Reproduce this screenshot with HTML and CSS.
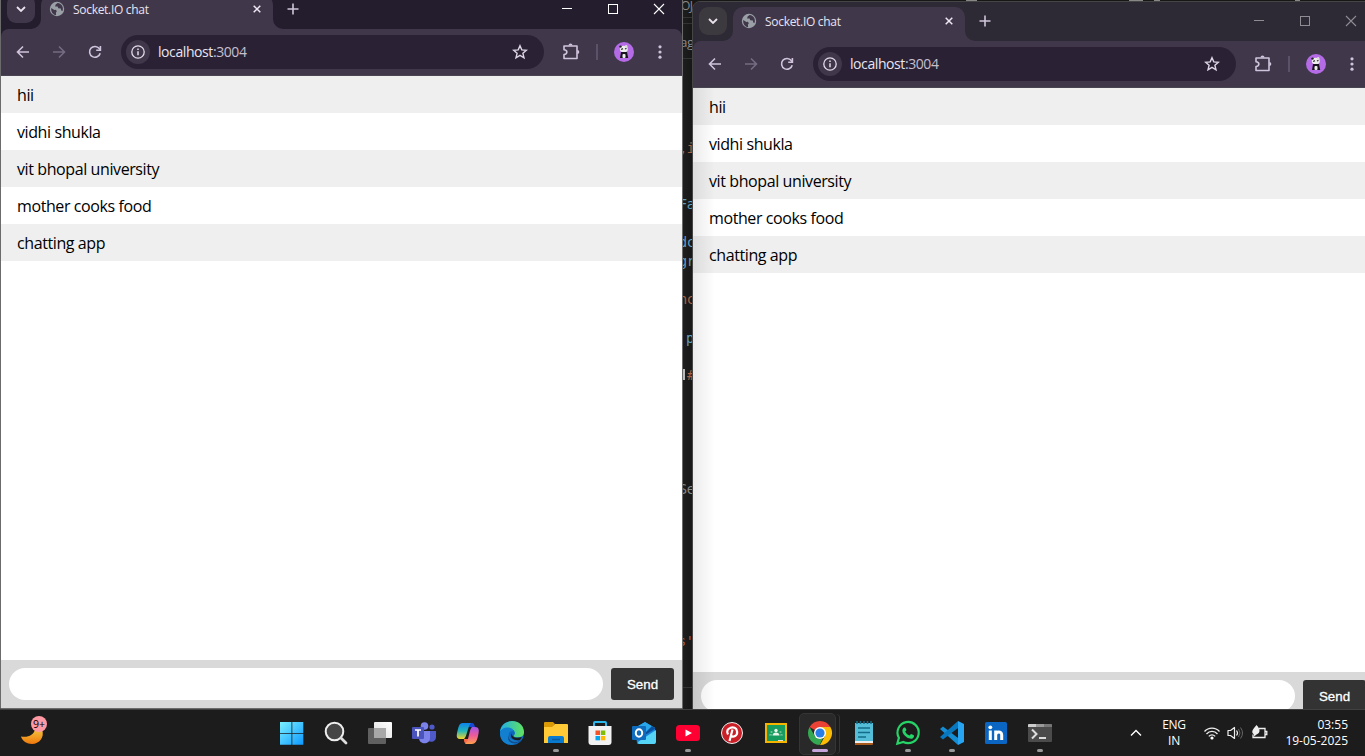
FILE: index.html
```html
<!DOCTYPE html>
<html lang="en">
<head>
<meta charset="utf-8">
<title>Socket.IO chat</title>
<link rel="stylesheet" href="styles.css">
</head>
<body>
<svg class="defs" aria-hidden="true">
  <defs>
    <symbol id="chev" viewBox="0 0 10 6"><path d="M1 1l4 4 4-4" fill="none" stroke="currentColor" stroke-width="1.8"/></symbol>
    <symbol id="globe" viewBox="0 0 16 16"><circle cx="8" cy="8" r="7.2" fill="#9aa0a6"/><path d="M2.2 6.9l3.2 2.1 1.6-.2.8 1.8-.9 1 .2 2.5C4.1 13.700 1.800 11 2.200 6.900zM8.600 1.900L6.600 3.500l-.5 1.900 2.500.1.700 1.700 2.500.3.600 2.200 1.100.3C14.800 6 12.800 2.400 8.600 1.900z" fill="#40374b"/></symbol>
    <symbol id="x" viewBox="0 0 8 8"><path d="M.7.7l6.600 6.600M7.300.7L.7 7.300" stroke="currentColor" stroke-width="1.500"/></symbol>
    <symbol id="plus" viewBox="0 0 12 12"><path d="M6 .5v11M.5 6h11" stroke="currentColor" stroke-width="1.600"/></symbol>
    <symbol id="back" viewBox="0 0 16 16"><path d="M14 8H3M8 2.500L2.500 8 8 13.500" fill="none" stroke="currentColor" stroke-width="1.600"/></symbol>
    <symbol id="reload" viewBox="0 0 16 16"><path d="M13.200 9.200A5.400 5.400 0 1 1 12.300 4.600L13.400 6" fill="none" stroke="currentColor" stroke-width="1.600"/><path d="M13.400 2v4.200H9.200" fill="none" stroke="currentColor" stroke-width="1.600"/></symbol>
    <symbol id="info" viewBox="0 0 14 14"><circle cx="7" cy="7" r="6.200" fill="none" stroke="currentColor" stroke-width="1.300"/><path d="M7 6.200v4M7 3.600v1.500" stroke="currentColor" stroke-width="1.500"/></symbol>
    <symbol id="star" viewBox="0 0 16 16"><path d="M8 1.700l1.800 4.200 4.600.4-3.500 3 1.100 4.500L8 11.400l-4 2.400 1.100-4.500-3.500-3 4.600-.4z" fill="none" stroke="currentColor" stroke-width="1.400"/></symbol>
    <symbol id="puzzle" viewBox="0 0 18 18"><path d="M2 3h13v12.500H2v-4c3.800-.2 3.800-4.600 0-4.800z" fill="none" stroke="currentColor" stroke-width="1.600" stroke-linejoin="round"/><path d="M6.500 2.500a2 2 0 0 1 4 0zM15.300 7a2 2 0 0 1 0 4z" fill="currentColor"/></symbol>
    <symbol id="avatar" viewBox="0 0 20 20"><circle cx="10" cy="10" r="10" fill="#b66be6"/><ellipse cx="9.800" cy="7" rx="4" ry="3.200" fill="#eee"/><circle cx="6.500" cy="4.600" r="1.200" fill="#222"/><circle cx="12.200" cy="4.200" r="1.200" fill="#ddd"/><path d="M7 7.500l2-.8M11 7l1.500-.6" stroke="#333" stroke-width="1.300"/><path d="M7 10h6l1.200 6H6z" fill="#18141c"/><rect x="8.500" y="12" width="3" height="4" rx="1" fill="#eee"/></symbol>
    <symbol id="dots" viewBox="0 0 4 14"><g fill="currentColor"><circle cx="2" cy="1.800" r="1.600"/><circle cx="2" cy="7" r="1.600"/><circle cx="2" cy="12.200" r="1.600"/></g></symbol>
    <symbol id="flare" viewBox="0 0 10 10"><path d="M10 0v10H0A10 10 0 0 0 10 0z" fill="#40374b"/></symbol>
  </defs>
</svg>

<div class="desktop">
  <div class="editor">
    <i class="rule r1"></i><i class="rule r2"></i><i class="rule r3"></i><i class="rule r4"></i>
    <span class="code grey c-oj">OJ</span>
    <span class="code grey c-ag">ag</span>
    <span class="code orange c-i">,i</span>
    <span class="code blue c-fa">Fa</span>
    <span class="code blue c-do">dc</span>
    <span class="code blue c-gr">gr</span>
    <span class="code orange c-no">nc</span>
    <span class="code blue c-p">p</span>
    <i class="cursor"></i><span class="code orange c-hash">#</span>
    <span class="code grey c-se">Se</span>
    <span class="code orange c-s">s'</span>
    <i class="bit b1"></i><i class="bit b2"></i><i class="bit b3"></i><i class="bit b4"></i>
  </div>

  <section class="window front">
    <header class="titlebar">
      <button class="tabsearch"><svg width="10" height="6"><use href="#chev"/></svg></button>
      <div class="tab">
        <svg class="flare fl" width="10" height="10"><use href="#flare"/></svg>
        <svg width="16" height="16"><use href="#globe"/></svg>
        <span class="tabtitle">Socket.IO chat</span>
        <svg class="tabclose" width="8" height="8"><use href="#x"/></svg>
        <svg class="flare fr" width="10" height="10"><use href="#flare"/></svg>
      </div>
      <svg class="newtab" width="12" height="12"><use href="#plus"/></svg>
      <div class="controls">
        <svg width="46" height="12"><path d="M18 5.500h10" stroke="currentColor"/></svg>
        <svg width="46" height="12"><rect x="18.500" y="1.500" width="9" height="9" fill="none" stroke="currentColor"/></svg>
        <svg width="46" height="12"><path d="M18 1l10 10M28 1L18 11" stroke="currentColor" stroke-width="1.100"/></svg>
      </div>
    </header>
    <nav class="toolbar">
      <svg class="nb" width="16" height="16"><use href="#back"/></svg>
      <svg class="nb fwd" width="16" height="16"><use href="#back"/></svg>
      <svg class="nb" width="16" height="16"><use href="#reload"/></svg>
      <div class="omni">
        <span class="site"><svg width="14" height="14"><use href="#info"/></svg></span>
        <span class="url">localhost<span class="port">:3004</span></span>
        <svg class="fav" width="16" height="16"><use href="#star"/></svg>
      </div>
      <svg class="ext" width="18" height="18"><use href="#puzzle"/></svg>
      <i class="sep"></i>
      <svg class="ava" width="20" height="20"><use href="#avatar"/></svg>
      <svg class="more" width="4" height="14"><use href="#dots"/></svg>
    </nav>
    <main class="page">
      <ul class="messages">
        <li>hii</li>
        <li>vidhi shukla</li>
        <li>vit bhopal university</li>
        <li>mother cooks food</li>
        <li>chatting app</li>
      </ul>
      <form class="form"><input class="input" autocomplete="off"><button class="send" type="button">Send</button></form>
    </main>
  </section>

  <section class="window rear">
    <header class="titlebar">
      <button class="tabsearch"><svg width="10" height="6"><use href="#chev"/></svg></button>
      <div class="tab">
        <svg class="flare fl" width="10" height="10"><use href="#flare"/></svg>
        <svg width="16" height="16"><use href="#globe"/></svg>
        <span class="tabtitle">Socket.IO chat</span>
        <svg class="tabclose" width="8" height="8"><use href="#x"/></svg>
        <svg class="flare fr" width="10" height="10"><use href="#flare"/></svg>
      </div>
      <svg class="newtab" width="12" height="12"><use href="#plus"/></svg>
      <div class="controls">
        <svg width="46" height="12"><path d="M18 5.500h10" stroke="currentColor"/></svg>
        <svg width="46" height="12"><rect x="18.500" y="1.500" width="9" height="9" fill="none" stroke="currentColor"/></svg>
        <svg width="46" height="12"><path d="M18 1l10 10M28 1L18 11" stroke="currentColor" stroke-width="1.100"/></svg>
      </div>
    </header>
    <nav class="toolbar">
      <svg class="nb" width="16" height="16"><use href="#back"/></svg>
      <svg class="nb fwd" width="16" height="16"><use href="#back"/></svg>
      <svg class="nb" width="16" height="16"><use href="#reload"/></svg>
      <div class="omni">
        <span class="site"><svg width="14" height="14"><use href="#info"/></svg></span>
        <span class="url">localhost<span class="port">:3004</span></span>
        <svg class="fav" width="16" height="16"><use href="#star"/></svg>
      </div>
      <svg class="ext" width="18" height="18"><use href="#puzzle"/></svg>
      <i class="sep"></i>
      <svg class="ava" width="20" height="20"><use href="#avatar"/></svg>
      <svg class="more" width="4" height="14"><use href="#dots"/></svg>
    </nav>
    <main class="page">
      <ul class="messages">
        <li>hii</li>
        <li>vidhi shukla</li>
        <li>vit bhopal university</li>
        <li>mother cooks food</li>
        <li>chatting app</li>
      </ul>
      <form class="form"><input class="input" autocomplete="off"><button class="send" type="button">Send</button></form>
    </main>
  </section>

  <footer class="taskbar">
    <div class="weather">
      <svg width="28" height="30" viewBox="0 0 28 30">
        <defs><linearGradient id="moon" x1="0" y1="0" x2="0" y2="1"><stop offset="0" stop-color="#f4c33c"/><stop offset="1" stop-color="#f0780c"/></linearGradient></defs>
        <path d="M1 21.500c7 1.500 13-2 14-7l7 0c3 8-3 14.500-10 14.500-5 0-10-3-11-7.500z" fill="url(#moon)"/>
        <circle cx="19" cy="9" r="8" fill="#ff99a4"/>
      </svg>
      <span class="count">9+</span>
    </div>
    <div class="apps">
      <span class="app"><svg width="24" height="24"><defs><linearGradient id="win" gradientUnits="userSpaceOnUse" x1="0" y1="0" x2="24" y2="24"><stop offset="0" stop-color="#7df3ff"/><stop offset="1" stop-color="#0b97ff"/></linearGradient></defs><path d="M0 1h11.500v11H0zM12.300 1h11v11h-11zM0 12.800h11.500v11H0zM12.300 12.800h11v11h-11z" fill="url(#win)"/></svg></span>
      <span class="app"><svg width="24" height="24"><circle cx="10.500" cy="10.500" r="8.800" fill="#454545" stroke="#eee" stroke-width="2"/><path d="M17 17l5 5" stroke="#ddd" stroke-width="2.800" stroke-linecap="round"/></svg></span>
      <span class="app"><svg width="24" height="24"><defs><linearGradient id="tv" x1="0" y1="1" x2="1" y2="0"><stop offset="0" stop-color="#ddd"/><stop offset="1" stop-color="#fff"/></linearGradient></defs><rect x="6" y="1" width="18" height="16" rx="1" fill="url(#tv)"/><rect x="0" y="7" width="18" height="16" rx="1" fill="#606060"/><path d="M6 7h12v10H6z" fill="#a8a8a8"/></svg></span>
      <span class="app"><svg width="24" height="24"><circle cx="12.500" cy="5" r="3.800" fill="#7b83eb"/><circle cx="20" cy="6" r="2.600" fill="#5059c9"/><path d="M16 10h8v6c0 4-4 6-8 4z" fill="#5059c9"/><path d="M7 10h11v7c0 7-11 7-11 0z" fill="#7b83eb"/><rect x="0" y="6" width="12" height="12" rx="1" fill="#4b53bc"/><path d="M3 9h6M6 9v6.500" stroke="#fff" stroke-width="1.700"/></svg></span>
      <span class="app"><svg width="24" height="24"><defs><linearGradient id="cp1" x1="0" y1="0" x2="0" y2="1"><stop offset="0" stop-color="#0c82ec"/><stop offset=".5" stop-color="#24b6b8"/><stop offset="1" stop-color="#f4d52a"/></linearGradient><linearGradient id="cp2" x1="0" y1="0" x2="0" y2="1"><stop offset="0" stop-color="#a256e8"/><stop offset=".5" stop-color="#ee5a98"/><stop offset="1" stop-color="#ffa04c"/></linearGradient></defs><path d="M12 2h4c2 0 2 1 3 4h-7z" fill="#1948d4"/><path d="M7 2h8c-3 2-4 14-7 16H4c-5 0-3-6-2-10 1-4 2-6 5-6z" fill="url(#cp1)"/><path d="M8 18h5l-1 5c-3 0-4-1-4-5z" fill="#ff6b43"/><path d="M16 6h3c5 0 4 5 3 9-1 5-3 8-6 8H9c4-2 4-15 7-17z" fill="url(#cp2)"/></svg></span>
      <span class="app"><svg width="24" height="24"><defs><linearGradient id="ed" x1="0" y1="0" x2="1" y2="0"><stop offset="0" stop-color="#20aee8"/><stop offset="1" stop-color="#62e35b"/></linearGradient></defs><circle cx="12" cy="12" r="12" fill="#0f66bd"/><path d="M0 11C1-3 23-4 24 11c0 5-5 6-9 5-3-1 0-2 0-4C14 6 3 5 0 11z" fill="url(#ed)"/><path d="M0 12C2 5 11 5 14 10 5 9 8 21 19 20 13 27 0 24 0 12z" fill="#1380cf"/><path d="M9 14c-1 6 6 9 12 5-4 6-16 4-12-5z" fill="#124c91"/><path d="M12 12c-1 4 4 6 10 4l-2 3c-6 1-11-2-8-7z" fill="#1c1c1c"/></svg></span>
      <span class="app running"><svg width="24" height="24"><path d="M0 2q0-1 1-1h8l2 2-3 4H0z" fill="#d99a05"/><path d="M0 6h8l3-3h12q1 0 1 1v18H0z" fill="#ffca36"/><path d="M4 22v-5q0-2 2-2h12q2 0 2 2v5z" fill="#087bd0"/><path d="M8 18.500h8" stroke="#085a9d" stroke-width="1.500"/></svg></span>
      <span class="app"><svg width="24" height="24"><path d="M6 6V2q0-1 1-1h10q1 0 1 1v4" fill="none" stroke="#2bb8ed" stroke-width="2"/><path d="M.5 5h23v16q0 3-3 3h-17q-3 0-3-3z" fill="#f2f2f2"/><path d="M7.500 9.500H12V14H7.500z" fill="#f35325"/><path d="M12.800 9.500h4.500V14h-4.500z" fill="#81bc06"/><path d="M7.500 15H12v4.300H7.500z" fill="#05a6f0"/><path d="M12.800 15h4.500v4.300h-4.500z" fill="#ffba08"/></svg></span>
      <span class="app"><svg width="24" height="24"><path d="M3 7l10-6 10 6v15q0 1-1 1H6q-1 0-1-1z" fill="#1684d8"/><path d="M6 5l7-4 10 6-9 7z" fill="#28a8ea"/><path d="M24 9v12q0 2-2 2H7q-1 0-1-2z" fill="#55d4f6"/><path d="M12 13l8-8 3.500 2.500L12 15z" fill="#0a4e9e"/><rect y="5" width="14" height="14" rx="1" fill="#0f6cbd"/><ellipse cx="7" cy="12" rx="3.200" ry="3.700" fill="none" stroke="#fff" stroke-width="2"/></svg></span>
      <span class="app running"><svg width="24" height="24"><rect y="4" width="24" height="16" rx="3.500" fill="#f03"/><path d="M9.500 8.500l6.500 3.500-6.500 3.500z" fill="#fff"/></svg></span>
      <span class="app"><svg width="24" height="24"><circle cx="12" cy="12" r="10.500" fill="#cb1f27" stroke="#eee"/><path d="M8 13.500c-4-7 8-10 9-3.500 1 5-4 7-6 4.500M12.500 8.500L9.500 20" fill="none" stroke="#fff" stroke-width="2.200"/></svg></span>
      <span class="app"><svg width="24" height="24"><rect x="2" y="3" width="20" height="18" fill="#179c5f" stroke="#f4b400" stroke-width="2"/><g fill="#e9f5e9"><circle cx="12" cy="9.500" r="1.700"/><path d="M8.500 14.500c0-4 7-4 7 0z"/></g><g fill="#72c497"><circle cx="7.500" cy="11" r="1.100"/><circle cx="16.500" cy="11" r="1.100"/><path d="M5 14.500c0-2 3-2 3.300 0zM16 14.500c0-2 3-2 3 0z"/></g><path d="M14 19.500h5" stroke="#dedede"/></svg></span>
      <span class="app active"><svg width="24" height="24"><path d="M12 12L1.600 6A12 12 0 0 1 22.400 6z" fill="#ea4335"/><path d="M12 6h10.400A12 12 0 0 1 12 24l5-9z" fill="#fbbc04"/><path d="M1.600 6l5.200 9 5.200 3 3-1L11.500 24A12 12 0 0 1 1.600 6z" fill="#34a853"/><circle cx="12" cy="12" r="6" fill="#fff"/><circle cx="12" cy="12" r="4.600" fill="#287de6"/></svg></span>
      <span class="app"><svg width="24" height="24"><path d="M3 2h18v19H3z" fill="#54bdd8"/><path d="M3 21h18v2q0 1-1 1H3z" fill="#a75a1c"/><path d="M3 20h18v2H3z" fill="#eee"/><path d="M5 0v3M8.500 0v3M12 0v3M15.500 0v3M19 0v3" stroke="#146d88" stroke-width="1.500"/><path d="M6 7h12M6 11.500h12M6 16h8" stroke="#146d88" stroke-width="1.700"/></svg></span>
      <span class="app running"><svg width="24" height="24"><path d="M1.300 22.700l1.600-5.900A10.600 10.600 0 1 1 7.300 21z" fill="none" stroke="#25d366" stroke-width="2.200"/><path d="M8 6.500c-5 4 3 12.500 8.500 11 2-1 1.700-3 1-3.500l-2.500-1-1.500 1.500c-2-.7-3.500-2-4.300-4L10.500 9 9.300 6.500z" fill="#25d366"/></svg></span>
      <span class="app running"><svg width="24" height="24"><path d="M3 5.500L18 17v7L0 8z" fill="#168cd3"/><path d="M18 0v7L3 18.500 0 16z" fill="#0877bd"/><path d="M18 0l6 3v18l-6 3z" fill="#27a4f2"/></svg></span>
      <span class="app"><svg width="24" height="24"><rect x="1" y="1" width="22" height="22" rx="1.500" fill="#0a66c2"/><circle cx="6.300" cy="6.300" r="1.900" fill="#fff"/><path d="M6.300 9.500V19M11.700 9.500V19M11.700 14c0-4 6-4.300 6 0v5" fill="none" stroke="#fff" stroke-width="3"/></svg></span>
      <span class="app running"><svg width="24" height="24"><rect y="3" width="24" height="18" rx="1" fill="#4b4b4b"/><path d="M0 6V4q0-1 1-1h7v3z" fill="#ccc"/><path d="M8 3h8v3H8z" fill="#999"/><path d="M16 3h7q1 0 1 1v2h-8z" fill="#777"/><path d="M4 8.500l4.500 4.500L4 17.500" fill="none" stroke="#ddd" stroke-width="2"/><path d="M11 17h7" stroke="#eee" stroke-width="1.800"/></svg></span>
    </div>
    <div class="tray">
      <svg class="up" width="12" height="8"><path d="M1 6.500l5-5 5 5" fill="none" stroke="#fff" stroke-width="1.400"/></svg>
      <div class="lang"><span>ENG</span><span>IN</span></div>
      <div class="status">
        <svg width="18" height="16"><g fill="none" stroke="#eee" stroke-width="1.300"><path d="M1.500 6.500c4-4.600 11-4.600 15 0M3.500 9c3-3.500 8-3.500 11 0M5.800 11.400c2-2.100 4.400-2.100 6.400 0"/></g><circle cx="9" cy="13" r="1.600" fill="#fff"/></svg>
        <svg width="18" height="16"><path d="M1 5.500h2.500L7.500 2.500v11l-4-3H1z" fill="none" stroke="#eee" stroke-width="1.200" stroke-linejoin="round"/><path d="M9.500 5.500q2 2.500 0 5" fill="none" stroke="#eee" stroke-width="1.200"/><path d="M11.500 4q3 4 0 8M13.500 2.500q4 5.500 0 11" fill="none" stroke="#666"/></svg>
        <svg width="18" height="16"><path d="M8 3.500h6v9H2v-3M14 6.500h1.800v3H14" fill="none" stroke="#eee" stroke-width="1.300"/><path d="M5.500 0c4 4 4 8 0 9.500L2.500 12c1-2 1-2-1-4C.5 5 3.500 3 5.500 0z" fill="#eee"/></svg>
      </div>
      <div class="clock"><span>03:55</span><span>19-05-2025</span></div>
    </div>
  </footer>
</div>
</body>
</html>
```
FILE: styles.css
```css
* { box-sizing: border-box; }
body { margin: 0; overflow: hidden; font-family: "Open Sans", "Noto Sans", sans-serif; }
svg { display: block; flex: none; overflow: visible; }
button, input { border: 0; padding: 0; outline: 0; font: inherit; }
.defs { position: absolute; width: 0; height: 0; }
.desktop { position: relative; width: 1365px; height: 756px; overflow: hidden; background: #1b1b1b; }

/* editor showing between and above the browser windows */
.editor { position: absolute; inset: 0; background: linear-gradient(90deg, #1e1e1e 683px, #171717 692px); }
.code { position: absolute; font: 13.500px/18px "DejaVu Sans Mono", monospace; letter-spacing: -.5px; white-space: pre; }
.grey { color: #888; } .orange { color: #a96142; } .blue { color: #5d9fc4; }
.c-oj { left: 681px; top: -3px; font-family: "Open Sans", sans-serif; font-size: 12px; }
.c-ag { left: 680px; top: 33px; font-family: "Open Sans", sans-serif; }
.c-i { left: 679px; top: 139px; }
.c-fa { left: 679px; top: 195px; }
.c-do { left: 679px; top: 233px; }
.c-gr { left: 679px; top: 252px; }
.c-no { left: 679px; top: 290px; }
.c-p { left: 686px; top: 329px; }
.c-hash { left: 687px; top: 366px; }
.c-se { left: 679px; top: 480px; }
.c-s { left: 678px; top: 632px; }
.cursor { position: absolute; left: 682px; top: 369px; width: 3px; height: 11px; background: #bbb; }
.rule { position: absolute; left: 683px; width: 10px; height: 1px; background: #333; }
.r1 { top: 17px; } .r2 { top: 23px; } .r3 { top: 58px; } .r4 { top: 687px; }
.bit { position: absolute; top: 0; height: 1px; background: #888; }
.b1 { left: 966px; width: 11px; } .b2 { left: 1129px; width: 14px; } .b3 { left: 1154px; width: 6px; } .b4 { left: 1295px; width: 5px; }

.window { position: absolute; width: 683px; height: 720px; border: 1px solid #6b6b6b; border-radius: 8px 8px 0 0; overflow: hidden; display: flex; flex-direction: column; }
.front { left: 0; top: -11px; --frame: #241d2e; color: #fff; }
.rear { left: 692px; top: 1px; border-color: #454545; --frame: #2d2935; color: #8f8c94; }
.titlebar { height: 39px; background: var(--frame); display: flex; align-items: center; padding: 0 0 1px 6px; flex: none; }
.tabsearch { width: 28px; height: 28px; border-radius: 9px; background: #40374b; color: #e8e2ee; display: grid; place-items: center; }
.rear .tabsearch { background: #3d3a3f; }
.tab { position: relative; width: 232px; height: 34px; align-self: flex-end; margin: 0 0 -1px 6px; padding: 0 12px 6px 8px; background: #40374b; border-radius: 10px 10px 0 0; display: flex; align-items: center; }
.flare { position: absolute; bottom: 0; }
.fl { left: -10px; } .fr { right: -10px; transform: scaleX(-1); }
.tabtitle { margin-left: 8px; padding-top: 2px; font-size: 12px; line-height: 18px; letter-spacing: -.3px; color: #e9e3ef; white-space: nowrap; }
.tabclose { margin-left: auto; color: #eee8f4; }
.newtab { margin-left: 14px; color: #cfc6da; }
.controls { display: flex; margin-left: auto; }

.toolbar { height: 47px; background: linear-gradient(#40374b, #40374b) padding-box, var(--frame); border-bottom: 1px solid #494451; border-radius: 8px 8px 0 0; display: flex; align-items: center; padding-left: 14px; color: #cfc4dc; flex: none; }
.window { background: var(--frame); }
.nb { margin-right: 20px; }
.fwd { transform: scaleX(-1); color: #766c82; }
.omni { width: 423px; height: 34px; border-radius: 17px; background: #2a2234; display: flex; align-items: center; padding: 0 16px 0 5px; margin-left: -2px; }
.site { width: 24px; height: 24px; border-radius: 50%; background: #40374b; display: grid; place-items: center; color: #e3dcea; }
.url { margin-left: 8px; font-size: 14px; line-height: 20px; letter-spacing: -.42px; color: #e9e4ee; white-space: nowrap; }
.port { color: #c5bfce; }
.fav { margin-left: auto; color: #ddd6e6; }
.ext { margin-left: 18px; }
.sep { width: 2px; height: 16px; margin-left: 16px; background: #5b5168; }
.ava { margin-left: 16px; }
.more { margin-left: 24px; }

.page { flex: 1; min-height: 0; display: flex; flex-direction: column; background: #fff; color: #000; position: relative; }
.messages { list-style: none; margin: 0; padding: 0; flex: 1; }
.messages li { height: 37px; padding: 0 16px; font-size: 16px; line-height: 38px; white-space: nowrap; letter-spacing: -.4px; }
.messages li:nth-child(odd) { background: #efefef; }
.form { height: 48px; display: flex; gap: 8px; padding: 8px; margin: 0; background: #d9d9d9; }
.input { flex: 1; min-width: 0; height: 32px; border-radius: 32px; background: #fff; }
.send { width: 63px; height: 32px; border-radius: 3px; background: #333; color: #fff; font: 13.333px "Liberation Sans", Arial, sans-serif; -webkit-text-stroke: .3px #fff; }
.rear .page::after { content: ""; position: absolute; inset: 0 auto 0 0; width: 22px; background: linear-gradient(90deg, rgba(0,0,0,.08), transparent); pointer-events: none; }

.taskbar { position: absolute; left: 0; right: 0; bottom: 0; height: 47px; border-top: 1px solid #414141; background: #1c1c1c; display: grid; grid-template-columns: 270px 792px 1fr; color: #fff; }
.weather { position: relative; padding: 5px 0 0 20px; }
.count { position: absolute; left: 31px; top: 7px; width: 16px; text-align: center; font-size: 10.500px; line-height: 14px; color: #000; }
.apps { display: flex; }
.app { position: relative; width: 44px; display: grid; place-items: center; }
.running::after, .active::after { content: ""; position: absolute; left: 19px; bottom: 4px; width: 6px; height: 3px; border-radius: 2px; background: #999; }
.active::after { left: 14px; width: 16px; background: #c6a5dc; }
.active::before { content: ""; position: absolute; left: 2px; top: 3px; width: 33px; height: 40px; border: 1px solid #353535; border-radius: 5px; background: #292929; box-shadow: 4px 0 0 -1px #1c1c1c, 5px 0 0 -1px #353535; left: 1px; width: 35px; }
.active svg { position: relative; }
.tray { display: flex; align-items: center; font-size: 12px; line-height: 16px; padding: 0 17px 0 68px; }
.lang { margin-left: 20px; width: 24px; display: flex; flex-direction: column; align-items: center; letter-spacing: -.3px; }
.status { display: flex; gap: 6px; margin-left: 17px; }
.clock { margin-left: auto; display: flex; flex-direction: column; align-items: flex-end; letter-spacing: 0; white-space: nowrap; }
```
